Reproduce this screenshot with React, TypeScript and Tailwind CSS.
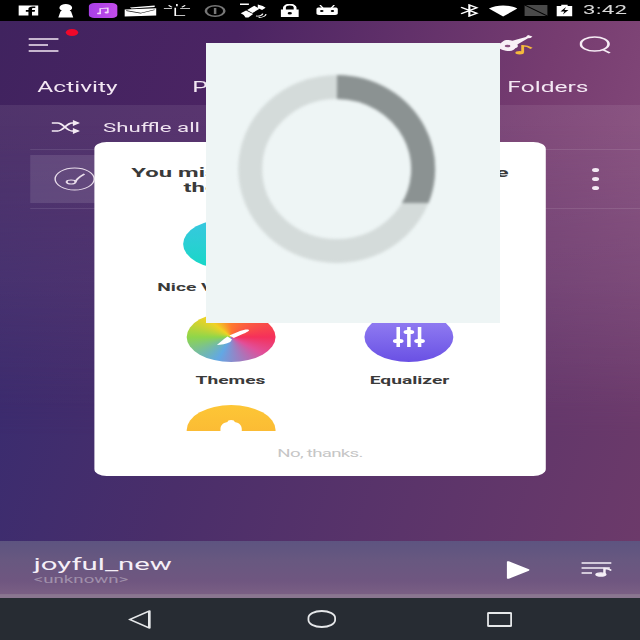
const roboto = "font-['Roboto','Liberation_Sans',sans-serif]";

function StatusIcons() {
  return (
    <>
      <span className="flex w-[21px] justify-center">
        <svg viewBox="0 0 12 12" className="h-[11px] w-[12px]">
          <path fill="#fff" d="M0 .5h12v11H8.2V7.3h1.6l.3-1.9H8.2V4.3c0-.6.2-.9.9-.9h1.1V1.7H8.7C7 1.7 6 2.7 6 4.2v1.2H4.4v1.9H6v4.2H0z" />
        </svg>
      </span>
      <span className="flex w-[21px] justify-center">
        <svg viewBox="0 0 12 14" className="h-[14px] w-[12px]">
          <path fill="#fff" d="M6 0a3.6 3.6 0 0 1 2.2 6.4L9 7.6l1.2 5.9H1.8L3 7.6l.8-1.2A3.6 3.6 0 0 1 6 0z" />
        </svg>
      </span>
      <span className="flex w-[21px] justify-center">
        <span className="flex h-[15px] w-[16px] items-center justify-center rounded-[3px] bg-gradient-to-r from-[#a83fe6] to-[#c24cea]">
          <svg viewBox="0 0 12 12" className="h-[8px] w-[10px]">
            <path fill="none" stroke="#f3d6fb" strokeWidth="1.3" d="M3.5 9.5V2.5L10 1.5v6.5" />
            <ellipse cx="2.6" cy="9.6" rx="1.8" ry="1.4" fill="#f3d6fb" />
            <ellipse cx="9" cy="8.2" rx="1.8" ry="1.4" fill="#f3d6fb" />
          </svg>
        </span>
      </span>
      <span className="flex w-[21px] justify-center">
        <svg viewBox="0 0 18 12" className="h-[12px] w-[18px]">
          <path fill="#fff" d="M3 2.4 17 .6v1.4L4 3.6z" />
          <path fill="#fff" d="M0 4.5 18 3.2v7.2L0 11.6z" />
          <path fill="none" stroke="#222" strokeWidth=".7" d="M1 5.6l8 2.6 8-3.4" />
        </svg>
      </span>
      <span className="flex w-[21px] justify-center">
        <svg viewBox="0 0 16 14" className="h-[13px] w-[15px]" fill="none" stroke="#fff" strokeWidth="1">
          <path d="M0 5h5M10 5h6M8 0v2.5M3 1.5l2 2M13 1.5l-2 2M7 4v8.5h6" />
        </svg>
      </span>
      <span className="flex w-[21px] justify-center">
        <svg viewBox="0 0 16 12" className="h-[12px] w-[16px]" fill="none" stroke="#777" strokeWidth="1.4">
          <circle cx="8" cy="6" r="5.2" />
          <path d="M8 3v6" />
        </svg>
      </span>
      <span className="flex w-[21px] justify-center">
        <svg viewBox="0 0 16 16" className="h-[16px] w-[16px]">
          <path fill="#fff" d="M11 1.5 13.8 3l1.6 1.8-2 2.2L11 5zM1.4 10.2l3-2.8 4 3.6-2.7 3.6-1.6-.2-1-2.4z" />
          <path fill="#fff" d="M5 7l4-4.2 3 3L8 10z" />
          <path fill="none" stroke="#fff" strokeWidth=".8" d="M10 13c2 .5 3.4-.5 3.8-2.4M11.5 14.5c2.4 0 4-1.6 4.2-3.5" />
          <path fill="#fff" d="M1 .5h5v1.6H1z" />
        </svg>
      </span>
      <span className="flex w-[21px] justify-center">
        <svg viewBox="0 0 12 13" className="h-[13px] w-[14px]">
          <path fill="none" stroke="#fff" strokeWidth="1.6" d="M3 6V3.6a3 3 0 0 1 6 0V6" />
          <path fill="#fff" fillRule="evenodd" d="M1 5.5h10V13H1zM6 8a1.2 1.2 0 1 0 0 2.4A1.2 1.2 0 0 0 6 8z" />
        </svg>
      </span>
      <span className="flex w-[21px] justify-center">
        <svg viewBox="0 0 14 12" className="h-[12px] w-[14px]">
          <path fill="none" stroke="#fff" strokeWidth=".9" d="M3 0l1.6 3M11 0 9.4 3" />
          <path fill="#fff" fillRule="evenodd" d="M2.5 2.5h9c1 0 1.5.6 1.5 1.6v4.2c0 1-.5 1.7-1.5 1.7h-9c-1 0-1.5-.7-1.5-1.7V4.1c0-1 .5-1.6 1.5-1.6zM4 5a1 1 0 1 0 0 2 1 1 0 0 0 0-2zm6 0a1 1 0 1 0 0 2 1 1 0 0 0 0-2z" />
        </svg>
      </span>
    </>
  );
}

function StatusRight() {
  return (
    <div className="ml-auto flex items-center pr-[5px]">
      <span className="flex w-[18px] justify-center">
        <svg viewBox="0 0 12 14" className="h-[13px] w-[12px]" fill="none" stroke="#fff" strokeWidth="1.3">
          <path d="M1 3.5 10.5 10 6 13V1l4.5 3L1 10.5" />
        </svg>
      </span>
      <span className="flex w-[19px] justify-center">
        <svg viewBox="0 0 16 11" className="h-[12px] w-[16px]">
          <path fill="#fff" d="M0 3C4.5-1 11.5-1 16 3l-8 8z" />
        </svg>
      </span>
      <span className="flex w-[18px] justify-center">
        <svg viewBox="0 0 14 12" className="h-[11px] w-[15px]">
          <path fill="#4a4a4a" d="M0 0h14v12H0z" />
          <path stroke="#000" strokeWidth="1" d="M0 0l14 12" />
        </svg>
      </span>
      <span className="flex w-[14px] justify-center">
        <svg viewBox="0 0 10 13" className="h-[13px] w-[9px]">
          <path fill="#fff" d="M3 0h4v1.5h3V13H0V1.5h3z" />
          <path fill="#000" d="M6 2.5 2.5 7.5H5L4 11l3.500-5H5z" />
        </svg>
      </span>
      <span className="w-[31px] pl-[4px] text-[12.5px] leading-none tracking-[0.2px] text-white/85">3:42</span>
    </div>
  );
}

function Tile({ label, bg, className, children }: { label?: string; bg: string; className?: string; children?: React.ReactNode }) {
  return (
    <div className={`flex flex-col items-center ${className ?? ''}`}>
      <div className={`flex h-[50px] w-[50px] items-center justify-center rounded-full ${bg}`}>{children}</div>
      {label && <span className="mt-[12px] h-[14px] whitespace-nowrap text-[10.8px] leading-[14px] font-bold text-[#3a3a3a]">{label}</span>}
    </div>
  );
}

export default function App() {
  return (
    <div className={`relative h-[640px] w-[640px] overflow-hidden bg-black ${roboto}`}>
      {/* the app itself is a 360 wide phone layout, stretched out to 640 */}
      <div className="relative flex h-[640px] w-[360px] origin-top-left scale-x-[1.7778] flex-col">
        <div className="flex h-[21px] shrink-0 items-center bg-black pl-[5px]">
          <StatusIcons />
          <StatusRight />
        </div>

        <main className="relative flex min-h-0 flex-1 flex-col bg-[linear-gradient(100deg,#40235f_0%,#4b2463_30%,#763c70_70%,#8c5280_100%)]">
          <div className="pointer-events-none absolute inset-0 bg-[linear-gradient(100deg,#322b72_0%,#4a2e6a_40%,#6c3a6a_100%)] [mask-image:linear-gradient(to_bottom,transparent_20%,black_80%)]" />

          <header className="relative flex h-[50px] shrink-0 items-center pr-[16px] pb-[2px] pl-[16px]">
            <div className="relative h-[14px] w-[17px]">
              <svg viewBox="0 0 17 14" className="h-[14px] w-[17px]" stroke="#f4e8f4" strokeWidth="1.6">
                <path d="M0 1h17M0 7h11M0 13h17" />
              </svg>
              <span className="absolute -top-[9px] left-[21px] h-[7px] w-[7px] rounded-full bg-[#f0082a]" />
            </div>
            <svg viewBox="0 0 20 20" className="mr-[25px] ml-auto h-[20px] w-[20px] overflow-visible">
              <path fill="#f8f0f6" d="M16 0l2.500 1.500-1 1.500-1.500.3L10 9.500c.6 1.500.3 3-1 3.500-.6 1.400-1.600 3-3.500 3C3 16-.5 14-1.500 11.500c-.6-1.500.5-2.800 2-3.300C1.500 7.500 1.700 6 3 5.300c1.400-.7 3-.4 4.200.5L14.800 2z" />
              <ellipse cx="4.5" cy="11" rx="1.6" ry="1.3" fill="#8a5080" />
              <path fill="none" stroke="#f5b93c" strokeWidth="1.6" d="M13 17.500V10.800c2 0 3.600 1 5 2.600" />
              <ellipse cx="11.3" cy="17.700" rx="2.400" ry="1.700" fill="#f5b93c" />
            </svg>
            <svg viewBox="0 0 18 18" className="h-[18px] w-[18px]" fill="none" stroke="#f6ecf5" strokeWidth="1.5">
              <ellipse cx="8.5" cy="8" rx="7.8" ry="7" />
              <path d="M13 13.500l4 3.500" />
            </svg>
          </header>

          <nav className="relative flex h-[34px] shrink-0 items-center pr-[29px] pl-[21px] text-[13.8px] leading-none text-[#f3e7f3]">
            <span>Activity</span>
            <span className="ml-[42px]">Playlists</span>
            <span className="ml-auto">Folders</span>
          </nav>

          <section className="relative flex min-h-0 flex-1 flex-col bg-[linear-gradient(to_bottom,rgba(255,255,255,0.08),rgba(255,255,255,0.05)_40%,transparent_70%)]">
            <div className="ml-[17px] flex h-[45px] shrink-0 items-center border-b border-white/10 pl-[12px]">
              <svg viewBox="0 0 16 14" className="h-[14px] w-[16px]" fill="none" stroke="#f4eaf4" strokeWidth="1.4">
                <path d="M0 3h3.500c3 0 5 8 8 8H15M0 11h3.500c3 0 5-8 8-8H15" />
                <path fill="#f4eaf4" stroke="none" d="M12 0l4 3-4 3zM12 8l4 3-4 3z" />
              </svg>
              <span className="mt-[2px] ml-[13px] text-[12.5px] leading-none text-[#efe3f0]">Shuffle all</span>
            </div>

            <div className="mt-[5px] ml-[17px] flex h-[48px] shrink-0 items-center pr-[23px]">
              <div className="flex h-full w-[150px] items-center bg-white/[0.11] pl-[13px]">
                <svg viewBox="0 0 24 24" className="h-[24px] w-[24px]" fill="none" stroke="#e8dcea" strokeWidth="0.8">
                  <circle cx="12" cy="12" r="11" />
                  <ellipse cx="10" cy="15" rx="2.5" ry="2" strokeWidth="1.2" />
                  <path strokeWidth="1.2" d="M12.500 15c.3-3 2.500-5.500 5-8" />
                </svg>
              </div>
              <div className="ml-auto flex w-[4px] flex-col items-center gap-[5px]">
                <span className="h-[4px] w-[4px] rounded-full bg-[#f4eaf4]" />
                <span className="h-[4px] w-[4px] rounded-full bg-[#f4eaf4]" />
                <span className="h-[4px] w-[4px] rounded-full bg-[#f4eaf4]" />
              </div>
            </div>
            <div className="mt-[5px] ml-[17px] border-b border-white/10" />
          </section>

          {/* dialog over the list */}
          <div className="absolute top-[121px] left-[53px] flex h-[334px] w-[254px] flex-col rounded-[7px] bg-white">
            <p className="mt-[23px] text-center text-[13.4px] leading-[15px] font-bold whitespace-nowrap text-[#3a3a3a]">
              You missed some great things here
              <br />
              these features are a must
            </p>
            <div className="mt-[24px] h-[212px] shrink-0 overflow-hidden">
              <div className="grid grid-cols-2 gap-y-[17px] px-[26.3px]">
                <Tile label="Nice Visualizers" className="mr-[4px]" bg="bg-gradient-to-b from-[#38c6e0] to-[#12d8c6]">
                  <svg viewBox="0 0 24 24" className="h-[24px] w-[24px]">
                    <path fill="#fff" d="M12 3l3 8 5 9H4l5-9z" />
                  </svg>
                </Tile>
                <Tile label="Sleep Timer" bg="bg-gradient-to-b from-[#6f8df0] to-[#5a6fe0]" />
                <Tile label="Themes" bg="bg-[conic-gradient(from_0deg,#ff7a2e,#f5305a_25%,#e0509a_37%,#62a8e4_55%,#8fd64a_75%,#f0d224_90%,#ff7a2e)]">
                  <svg viewBox="0 0 24 24" className="h-[24px] w-[24px]">
                    <path fill="#fff" d="M22 5c-.5-1-3-.3-5 1l-6 4.500 2.500 2.500 5-4c2-1.500 4-3 3.500-4zM10 11.500l-2 2.500L4 20c2 0 5.500-1 7.500-3l1-2.500z" />
                  </svg>
                </Tile>
                <Tile label="Equalizer" bg="bg-gradient-to-b from-[#9a84f4] to-[#6a50e4]">
                  <svg viewBox="0 0 24 24" className="h-[24px] w-[24px]" fill="#fff">
                    <path d="M5 2h2v12H5zM5 18h2v4H5zM11 2h2v3h-2zM11 9h2v13h-2zM17 2h2v12h-2zM17 18h2v4h-2z" />
                    <rect x="3" y="14" width="6" height="4" rx="2" />
                    <rect x="9" y="5" width="6" height="4" rx="2" />
                    <rect x="15" y="14" width="6" height="4" rx="2" />
                  </svg>
                </Tile>
                <Tile bg="bg-gradient-to-b from-[#fdc636] to-[#f9b233]">
                  <svg viewBox="0 0 24 24" className="h-[24px] w-[24px]">
                    <path fill="#fff" d="M12 2a2 2 0 0 1 2 2c3 1 4 4 4 7v5l2 2H4l2-2v-5c0-3 1-6 4-7a2 2 0 0 1 2-2z" />
                  </svg>
                </Tile>
              </div>
            </div>
            <button className="mt-[18px] self-center text-[10.5px] leading-none tracking-[-0.4px] text-[#c6c6c6]">No, thanks.</button>
          </div>
        </main>

        <footer className="relative flex h-[57px] shrink-0 items-center bg-[linear-gradient(180deg,#5d5480_0%,#685880_35%,#6f5680_70%,#7a5f84_93%,#8a7690_94%,#8a7690_100%)] pr-[16px] pl-[19px]">
          <div className="flex flex-col pt-[2px]">
            <span className="text-[16.5px] leading-[18px] text-[#f5eff7]">joyful_new</span>
            <span className="text-[10.5px] leading-[12px] text-white/35">&lt;unknown&gt;</span>
          </div>
          <svg viewBox="0 0 13 18" className="mr-[29px] ml-auto h-[18px] w-[13px]">
            <path fill="#fff" d="M0 1c0-.8.6-1 1.200-.7l11.300 8c.5.4.5 1 0 1.400l-11.300 8c-.6.3-1.200 0-1.200-.7z" />
          </svg>
          <svg viewBox="0 0 17 15" className="h-[15px] w-[17px]" fill="none" stroke="#f5eff7" strokeWidth="1.4">
            <path d="M0 1h17M0 6h16M0 11h6" />
            <path d="M13 12V6.500c1.500 0 3 .5 4 2" />
            <ellipse cx="11" cy="12.500" rx="2.500" ry="1.600" fill="#f5eff7" />
          </svg>
        </footer>

        <div className="flex h-[42px] shrink-0 items-center bg-[#272c33] px-[30px]">
          <span className="flex flex-1 justify-center pr-[4px]">
            <svg viewBox="0 0 13 19" className="h-[19px] w-[13px]" fill="none" stroke="#e6e8ea" strokeWidth="1.5">
              <path strokeLinejoin="round" d="M12 1v17L1 9.500z" />
            </svg>
          </span>
          <span className="flex flex-1 justify-center pr-[1px]">
            <span className="h-[18px] w-[16px] rounded-full border-2 border-x-[1.3px] border-[#e6e8ea]" />
          </span>
          <span className="flex flex-1 justify-center pl-[2px]">
            <span className="h-[15px] w-[14px] rounded-[1px] border-2 border-x-[1.3px] border-[#e6e8ea]" />
          </span>
        </div>
      </div>

      {/* loading placeholder sits over everything and is not stretched */}
      <div className="absolute top-[43px] left-[206px] h-[280px] w-[294px] bg-[#eef5f5]">
        <svg viewBox="0 0 294 280" className="h-[280px] w-[294px] blur-[1.5px]" fill="none" strokeWidth="24">
          <defs>
            <clipPath id="arc-end">
              <rect x="0" y="0" width="294" height="160" />
            </clipPath>
          </defs>
          <ellipse cx="130.7" cy="126" rx="86.5" ry="82" stroke="#d4dbda" />
          <path stroke="#8b9292" clipPath="url(#arc-end)" d="M131 44A86.500 82 0 0 1 200 175" />
        </svg>
      </div>
    </div>
  );
}
